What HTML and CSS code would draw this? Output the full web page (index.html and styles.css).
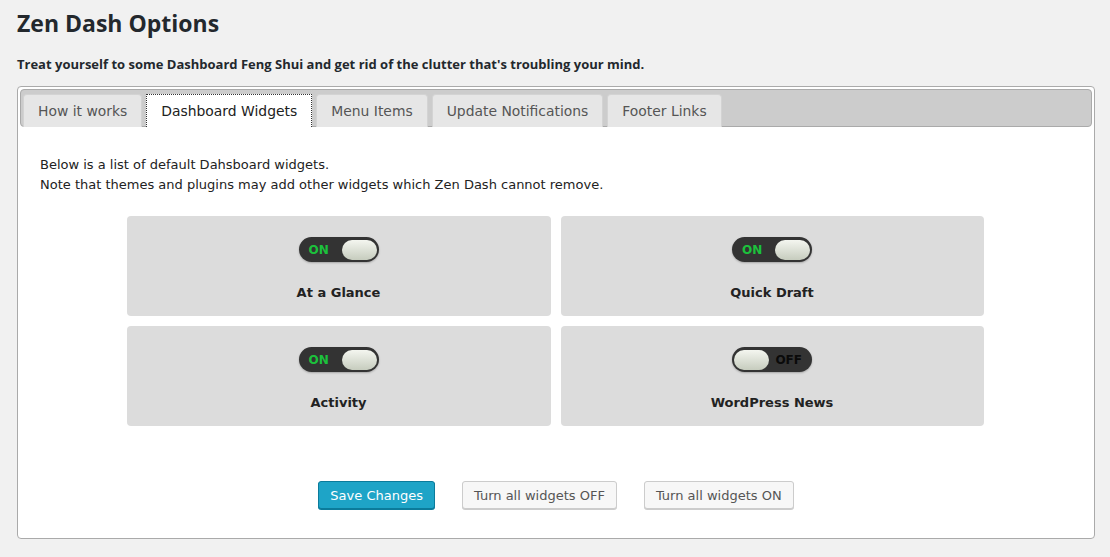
FILE: index.html
```html
<!DOCTYPE html>
<html>
<head>
<meta charset="utf-8">
<link rel="stylesheet" href="styles.css">
</head>
<body>
<div class="wrap">
  <h1 class="title">Zen Dash Options</h1>
  <p class="intro">Treat yourself to some Dashboard Feng Shui and get rid of the clutter that's troubling your mind.</p>
  <div class="tabs">
    <ul class="tab-nav">
      <li class="tab">How it works</li>
      <li class="tab active">Dashboard Widgets</li>
      <li class="tab">Menu Items</li>
      <li class="tab">Update Notifications</li>
      <li class="tab">Footer Links</li>
    </ul>
    <div class="panel">
      <p class="note">Below is a list of default Dahsboard widgets.<br>Note that themes and plugins may add other widgets which Zen Dash cannot remove.</p>
      <div class="cards">
        <div class="card">
          <div class="toggle on"><span class="lbl">ON</span><span class="knob"></span></div>
          <div class="name">At a Glance</div>
        </div>
        <div class="card">
          <div class="toggle on"><span class="lbl">ON</span><span class="knob"></span></div>
          <div class="name">Quick Draft</div>
        </div>
        <div class="card">
          <div class="toggle on"><span class="lbl">ON</span><span class="knob"></span></div>
          <div class="name">Activity</div>
        </div>
        <div class="card">
          <div class="toggle off"><span class="knob"></span><span class="lbl">OFF</span></div>
          <div class="name">WordPress News</div>
        </div>
      </div>
      <div class="actions">
        <button class="btn primary">Save Changes</button>
        <button class="btn">Turn all widgets OFF</button>
        <button class="btn">Turn all widgets ON</button>
      </div>
    </div>
  </div>
</div>
</body>
</html>
```

FILE: styles.css
```css
html, body {
  margin: 0;
  padding: 0;
  background: #f1f1f1;
}
body {
  font-family: "DejaVu Sans", Verdana, sans-serif;
  color: #222;
}
.wrap {
  padding: 0 15px 0 17px;
}
.title {
  font-family: "Open Sans", sans-serif;
  font-weight: 700;
  font-size: 23px;
  line-height: 29px;
  margin: 0;
  padding: 9px 0 0;
  color: #23282d;
}
.intro {
  font-family: "Open Sans", sans-serif;
  font-weight: 700;
  font-size: 13px;
  line-height: 18px;
  margin: 17px 0 0;
  color: #23282d;
}
.tabs {
  margin-top: 13px;
  border: 1px solid #aaa;
  border-radius: 4px;
  background: #fff;
  padding: 2px;
}
.tab-nav {
  list-style: none;
  margin: 0;
  padding: 4px 2px 0;
  background: #ccc;
  border: 1px solid #aaa;
  border-radius: 4px;
  display: flex;
  gap: 4px;
  height: 32px;
}
.tab {
  box-sizing: border-box;
  padding: 0 14px;
  border: 1px solid #d3d3d3;
  border-bottom: none;
  border-radius: 4px 4px 0 0;
  background: #e6e6e6;
  color: #555;
  font-size: 13.9px;
  line-height: 33px;
  margin-bottom: -1px;
  height: 33px;
}
.tab.active {
  background: #fff;
  color: #212121;
  border: 1px dotted #333;
  border-bottom: none;
  border-radius: 0;
}
.panel {
  padding: 28px 20px 27px 20px;
}
.note {
  margin: 0;
  font-size: 13px;
  line-height: 20px;
  color: #222;
}
.cards {
  display: grid;
  grid-template-columns: 424px 423px;
  gap: 10px 10px;
  justify-content: center;
  margin: 21px 0 0 -2px;
}
.card {
  background: #dcdcdc;
  border-radius: 4px;
  height: 100px;
  display: flex;
  flex-direction: column;
  align-items: center;
  padding-top: 21px;
  box-sizing: border-box;
}
.toggle {
  width: 80px;
  height: 25px;
  box-sizing: border-box;
  background: #333;
  border-radius: 13px;
  display: flex;
  align-items: center;
  justify-content: space-between;
  padding: 0 2px;
  box-shadow: 0 1px 2px rgba(0,0,0,0.25);
}
.toggle .lbl {
  font-size: 12px;
  font-weight: bold;
  padding-left: 8px;
}
.toggle.on .lbl {
  color: #1cc13c;
}
.toggle.off .lbl {
  color: #0a0a0a;
  padding: 0 8px 0 0;
}
.knob {
  width: 35px;
  height: 20px;
  border-radius: 10px;
  background: linear-gradient(#f4f6f0, #c6ccbe);
}
.name {
  margin-top: 23px;
  font-size: 13px;
  font-weight: bold;
  color: #222;
}
.actions {
  display: flex;
  justify-content: center;
  gap: 27px;
  margin-top: 55px;
}
.btn {
  font-family: "DejaVu Sans", Verdana, sans-serif;
  font-size: 13px;
  height: 28px;
  padding: 0 11px;
  border: 1px solid #ccc;
  border-radius: 3px;
  background: #f7f7f7;
  color: #555;
  box-shadow: 0 1px 0 #ccc;
}
.btn.primary {
  background: #1ea4c7;
  border-color: #0b7b9b;
  color: #fff;
  box-shadow: 0 1px 0 #0b7b9b;
}
```
